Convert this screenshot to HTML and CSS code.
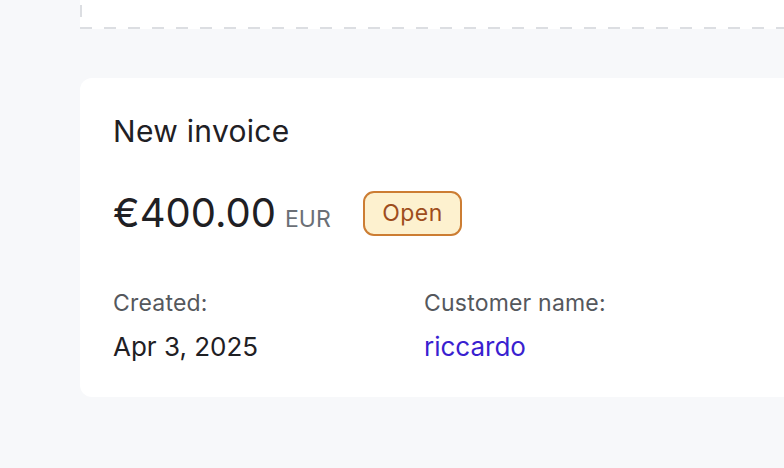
FILE: index.html
```html
<!DOCTYPE html>
<html>
<head>
<meta charset="utf-8">
<link rel="stylesheet" href="styles.css">
</head>
<body>
<div class="page">
  <div class="dropzone"></div>
  <section class="card">
    <h1 class="title">New invoice</h1>
    <div class="amount-row">
      <div class="amount"><span class="value">€400.00</span><span class="currency">EUR</span></div>
      <span class="badge">Open</span>
    </div>
    <div class="details">
      <div class="field">
        <div class="label">Created:</div>
        <div class="data">Apr 3, 2025</div>
      </div>
      <div class="field">
        <div class="label">Customer name:</div>
        <a class="data link" href="#">riccardo</a>
      </div>
    </div>
  </section>
</div>
</body>
</html>
```

FILE: styles.css
```css
* { box-sizing: border-box; }
html, body { margin: 0; padding: 0; }
body {
  background: #f7f8fa;
  font-family: Inter, "Noto Sans", sans-serif;
  color: #1f2024;
  width: 784px;
  height: 468px;
  overflow: hidden;
}
.page {
  padding-left: 80px;
}
.dropzone {
  height: 29px;
  background-color: #ffffff;
  background-image:
    repeating-linear-gradient(to right, #dcdee2 0 12px, transparent 12px 24px),
    repeating-linear-gradient(to bottom, #dcdee2 0 12px, transparent 12px 24px);
  background-size: 100% 2px, 2px 100%;
  background-position: 0 100%, 0 5px;
  background-repeat: no-repeat;
}
.card {
  margin-top: 49px;
  background: #ffffff;
  border-radius: 12px 0 0 12px;
  padding: 35px 32px 0 33px;
  height: 319px;
}
.title {
  margin: 0;
  font-size: 30px;
  font-weight: 400;
  line-height: 36px;
  letter-spacing: 0.3px;
}
.amount-row {
  display: flex;
  align-items: center;
  gap: 32px;
  margin-top: 41px;
}
.amount { display: flex; align-items: baseline; gap: 9px; }
.value { font-size: 40px; line-height: 46px; }
.currency { font-size: 23px; color: #6b6f76; }
.badge {
  display: inline-flex;
  align-items: center;
  height: 45px;
  padding: 0 17.5px;
  border: 2px solid #cc7d33;
  background: #fdf1cf;
  color: #9e4d1d;
  border-radius: 11px;
  font-size: 23px;
  letter-spacing: 0.5px;
}
.details {
  display: grid;
  grid-template-columns: 311px 1fr;
  margin-top: 53px;
}
.label { font-size: 23px; color: #55585d; line-height: 28px; letter-spacing: 0.2px; }
.data { display: block; font-size: 26px; line-height: 32px; margin-top: 14px; color: #1f2024; text-decoration: none; }
.link { color: #3a1fd0; }
```
